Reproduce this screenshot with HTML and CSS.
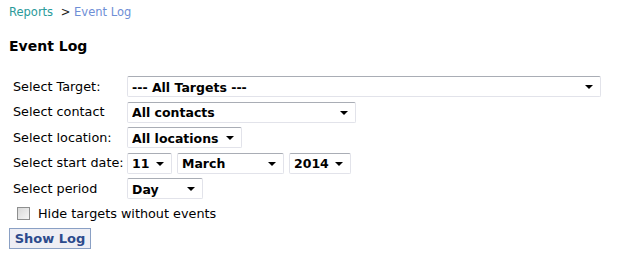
FILE: index.html
```html
<!DOCTYPE html>
<html lang="en">
<head>
    <meta charset="UTF-8">
    <title>Event Log</title>
    <link rel="stylesheet" href="styles.css">
</head>
<body>
    <div class="breadcrumb">
        <a href="#" class="crumb-link">Reports</a>
        <span class="crumb-sep">&gt;</span>
        <span class="crumb-current">Event Log</span>
    </div>

    <h1 class="page-title">Event Log</h1>

    <form class="filters">
        <div class="filter-grid">
            <label class="filter-label">Select Target:</label>
            <span class="sel sel-target">
                <select><option>--- All Targets ---</option></select>
            </span>

            <label class="filter-label">Select contact</label>
            <span class="sel sel-contact">
                <select><option>All contacts</option></select>
            </span>

            <label class="filter-label">Select location:</label>
            <span class="sel sel-location">
                <select><option>All locations</option></select>
            </span>

            <label class="filter-label">Select start date:</label>
            <div class="date-row">
                <span class="sel sel-day">
                    <select><option>11</option></select>
                </span>
                <span class="sel sel-month">
                    <select><option>March</option></select>
                </span>
                <span class="sel sel-year">
                    <select><option>2014</option></select>
                </span>
            </div>

            <label class="filter-label">Select period</label>
            <span class="sel sel-period">
                <select><option>Day</option></select>
            </span>
        </div>

        <label class="hide-check">
            <input type="checkbox">
            <span>Hide targets without events</span>
        </label>

        <button type="button" class="show-btn">Show Log</button>
    </form>
</body>
</html>
```

FILE: styles.css
```css
* {
    box-sizing: border-box;
}

body {
    margin: 0;
    padding: 4px 9px;
    font-family: "DejaVu Sans", Verdana, sans-serif;
    font-size: 12.8px;
    color: #000;
    background: #fff;
}

.breadcrumb {
    height: 16px;
    line-height: 16px;
    font-size: 11.5px;
}

.crumb-link {
    color: #2a9a9a;
    text-decoration: none;
}

.crumb-sep {
    color: #222;
    margin-left: 4px;
}

.crumb-current {
    color: #6e8ed6;
}

.page-title {
    margin: 18px 0 0;
    font-size: 14px;
    font-weight: bold;
    line-height: 16px;
}

.filters {
    margin-top: 22px;
    padding-left: 4px;
}

.filter-grid {
    display: grid;
    grid-template-columns: 114px auto;
    row-gap: 4.5px;
    align-items: center;
}

.filter-label {
    line-height: 16px;
}

.date-row {
    display: flex;
    gap: 5px;
}

.sel {
    position: relative;
    display: inline-block;
    justify-self: start;
}

.sel select {
    appearance: none;
    -webkit-appearance: none;
    display: block;
    width: 100%;
    height: 21px;
    margin: 0;
    padding: 1px 20px 0 4px;
    font-family: "DejaVu Sans", Verdana, sans-serif;
    font-size: 12.5px;
    font-weight: bold;
    color: #000;
    background: #fff;
    border: 1px solid #e2e3ea;
    border-top-color: #a9adb5;
    border-radius: 2px;
}

.sel::after {
    content: "";
    position: absolute;
    right: 8px;
    top: 9px;
    border-left: 4px solid transparent;
    border-right: 4px solid transparent;
    border-top: 4px solid #000;
    pointer-events: none;
}

.sel-target { width: 474px; }
.sel-contact { width: 229px; }
.sel-location { width: 115px; }
.sel-day { width: 45px; }
.sel-month { width: 107px; }
.sel-year { width: 62px; }
.sel-period { width: 76px; }

.hide-check {
    display: flex;
    align-items: center;
    margin-top: 6px;
    height: 17px;
}

.hide-check input {
    appearance: none;
    -webkit-appearance: none;
    width: 13px;
    height: 13px;
    margin: 0 8px 0 4px;
    border: 1px solid #8e8f8f;
    background: linear-gradient(135deg, #d8d8d8, #f6f6f6);
}

.show-btn {
    display: block;
    margin: 6px 0 0 -4px;
    width: 82px;
    height: 21px;
    padding: 0;
    font-family: "DejaVu Sans", Verdana, sans-serif;
    font-size: 13px;
    font-weight: bold;
    color: #2c4a8c;
    background: #eeeef4;
    border: 1px solid #8aa0c4;
}
```
